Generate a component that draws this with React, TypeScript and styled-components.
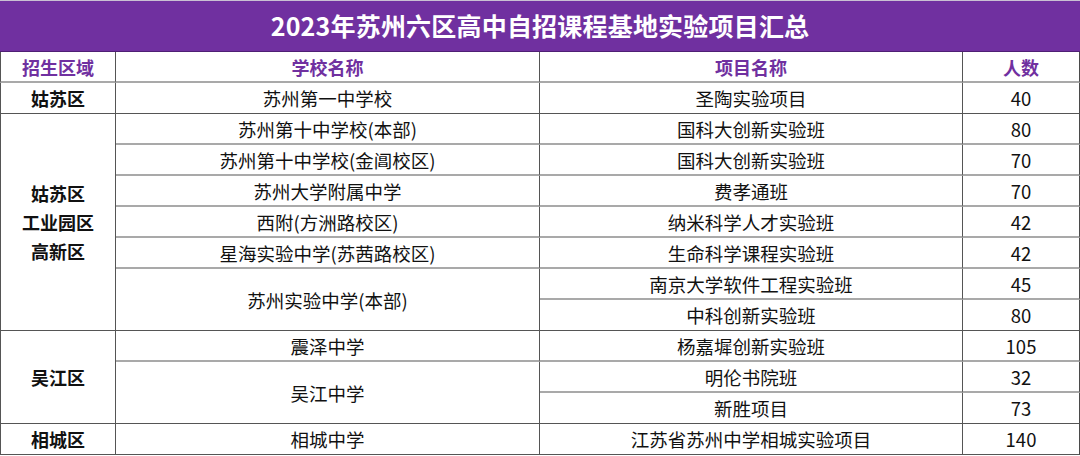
import React from "react";
import styled, { createGlobalStyle } from "styled-components";

const Global = createGlobalStyle`
  html, body { margin: 0; padding: 0; background: #ffffff; }
  body { font-family: "Noto Sans CJK SC", "Noto Sans", sans-serif; }
`;

const Page = styled.div`
  width: 1080px;
  height: 456px;
  overflow: hidden;
  background: #fff;
`;

const Title = styled.div`
  height: 52px;
  box-sizing: border-box;
  background: #7030a0;
  border-top: 1px solid #c9c0d3;
  border-bottom: 1px solid #4f1f74;
  color: #fff;
  font-weight: 700;
  font-size: 25px;
  line-height: 1;
  display: flex;
  align-items: center;
  justify-content: center;
  letter-spacing: 0.2px;
  padding-bottom: 2px;
`;

const Grid = styled.div`
  display: grid;
  grid-template-columns: 116px 424px 423px 117px;
  grid-auto-rows: 31px;
`;

type CellProps = {
  $col: number;
  $row: number;
  $span?: number;
  $strong?: boolean;
  $head?: boolean;
  $bold?: boolean;
};

const Cell = styled.div<CellProps>`
  grid-column: ${(p) => p.$col};
  grid-row: ${(p) => p.$row} / span ${(p) => p.$span ?? 1};
  box-sizing: border-box;
  display: flex;
  flex-direction: column;
  align-items: center;
  justify-content: center;
  text-align: center;
  border-right: 1px solid ${(p) => (p.$col === 4 ? "#4a4a4a" : "#555555")};
  border-left: ${(p) => (p.$col === 1 ? "1px solid #555555" : "none")};
  border-bottom: ${(p) => (p.$strong ? "1px solid #555555" : "2px solid #a9a9a9")};
  font-size: ${(p) => (p.$head || p.$bold ? "18px" : "18.5px")};
  line-height: 1;
  color: ${(p) => (p.$head ? "#7030a0" : "#111111")};
  font-weight: ${(p) => (p.$head || p.$bold ? 700 : 400)};
  padding-top: 1px;
`;

const Line = styled.span`
  display: block;
  line-height: 29px;
`;

type Row = { school?: [string, number]; project: string; count: string };

const rows: Row[] = [
  { school: ["苏州第一中学校", 1], project: "圣陶实验项目", count: "40" },
  { school: ["苏州第十中学校(本部)", 1], project: "国科大创新实验班", count: "80" },
  { school: ["苏州第十中学校(金阊校区)", 1], project: "国科大创新实验班", count: "70" },
  { school: ["苏州大学附属中学", 1], project: "费孝通班", count: "70" },
  { school: ["西附(方洲路校区)", 1], project: "纳米科学人才实验班", count: "42" },
  { school: ["星海实验中学(苏茜路校区)", 1], project: "生命科学课程实验班", count: "42" },
  { school: ["苏州实验中学(本部)", 2], project: "南京大学软件工程实验班", count: "45" },
  { project: "中科创新实验班", count: "80" },
  { school: ["震泽中学", 1], project: "杨嘉墀创新实验班", count: "105" },
  { school: ["吴江中学", 2], project: "明伦书院班", count: "32" },
  { project: "新胜项目", count: "73" },
  { school: ["相城中学", 1], project: "江苏省苏州中学相城实验项目", count: "140" },
];

const regions: { lines: string[]; start: number; span: number }[] = [
  { lines: ["姑苏区"], start: 0, span: 1 },
  { lines: ["姑苏区", "工业园区", "高新区"], start: 1, span: 7 },
  { lines: ["吴江区"], start: 8, span: 3 },
  { lines: ["相城区"], start: 11, span: 1 },
];

const groupEnds = new Set([0, 7, 10, 11]);

export default function App() {
  return (
    <Page>
      <Global />
      <Title>2023年苏州六区高中自招课程基地实验项目汇总</Title>
      <Grid>
        <Cell $col={1} $row={1} $head>招生区域</Cell>
        <Cell $col={2} $row={1} $head>学校名称</Cell>
        <Cell $col={3} $row={1} $head>项目名称</Cell>
        <Cell $col={4} $row={1} $head>人数</Cell>
        {regions.map((r) => (
          <Cell key={`r${r.start}`} $col={1} $row={r.start + 2} $span={r.span} $strong $bold>
            {r.lines.map((l, i) => (
              <Line key={i}>{l}</Line>
            ))}
          </Cell>
        ))}
        {rows.map((row, i) => {
          const endIdx = i + (row.school ? row.school[1] : 1) - 1;
          return (
            <React.Fragment key={i}>
              {row.school && (
                <Cell $col={2} $row={i + 2} $span={row.school[1]} $strong={groupEnds.has(endIdx)}>
                  {row.school[0]}
                </Cell>
              )}
              <Cell $col={3} $row={i + 2} $strong={groupEnds.has(i)}>
                {row.project}
              </Cell>
              <Cell $col={4} $row={i + 2} $strong={groupEnds.has(i)}>
                {row.count}
              </Cell>
            </React.Fragment>
          );
        })}
      </Grid>
    </Page>
  );
}
